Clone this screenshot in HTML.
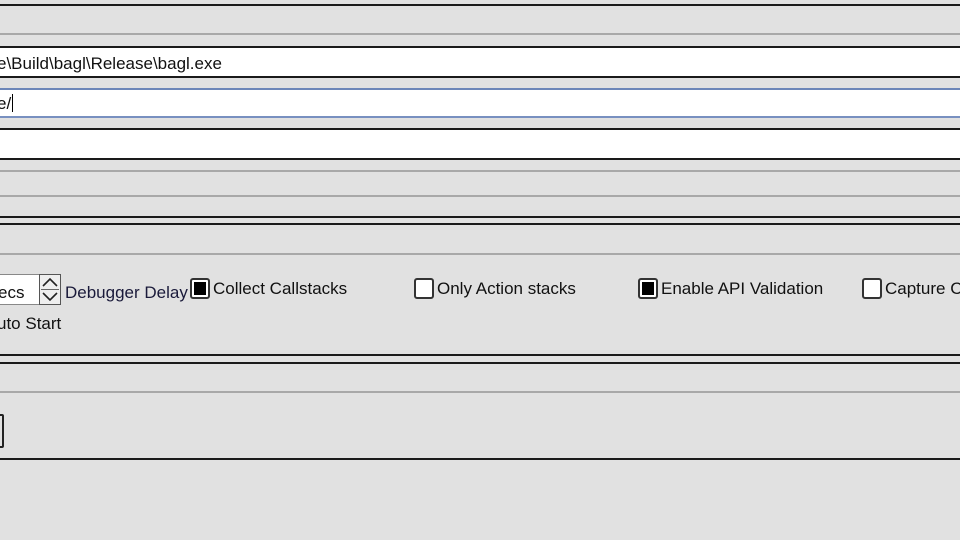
<!DOCTYPE html>
<html><head><style>
body{margin:0;width:960px;height:540px;background:#e1e1e1;position:relative;overflow:hidden;font-family:"Liberation Sans",sans-serif;font-size:17px;color:#111;}
.l{position:absolute;left:0;width:960px;}
.d{height:2px;background:#1a1a1a;}
.g{height:2px;background:#a8a8a8;}
.w{background:#fff;}
.t{position:absolute;white-space:nowrap;}
.cb{position:absolute;width:20px;height:21px;border:2px solid #333;border-radius:3px;background:#fff;box-sizing:border-box;}
.cb.on::after{content:"";position:absolute;left:2px;top:2px;width:12px;height:13px;background:#000;}
</style></head><body>
<div class="l d" style="top:4px"></div>
<div class="l g" style="top:33px"></div>
<div class="l d" style="top:46px"></div>
<div class="l w" style="top:48px;height:29px"></div>
<div class="l d" style="top:76px"></div>
<div class="t" style="left:-3px;top:54px">e\Build\bagl\Release\bagl.exe</div>
<div class="l w" style="top:88px;height:30px;border-top:2px solid #6c86b8;border-bottom:2px solid #7890c0;box-sizing:border-box"></div>
<div class="t" style="left:-3px;top:94px">e/<span style="display:inline-block;width:1px;height:18px;background:#000;vertical-align:-3px;margin-left:1px"></span></div>
<div class="l d" style="top:128px"></div>
<div class="l w" style="top:130px;height:28px"></div>
<div class="l d" style="top:158px"></div>
<div class="l g" style="top:170px"></div>
<div class="l g" style="top:195px"></div>
<div class="l d" style="top:216px"></div>
<div class="l d" style="top:223px"></div>
<div class="l g" style="top:253px"></div>
<div style="position:absolute;left:0;top:274px;width:40px;height:31px;background:#fff;border:1px solid #888;border-left:none;box-sizing:border-box"></div>
<div class="t" style="left:-2px;top:283px">ecs</div>
<div style="position:absolute;left:39px;top:274px;width:22px;height:31px;border:1px solid #555;box-sizing:border-box;background:#eee">
<svg width="20" height="29" style="position:absolute;left:0;top:0"><path d="M3 11 L10 4 L17 11" stroke="#222" stroke-width="1.6" fill="none"/><line x1="1" y1="14.5" x2="19" y2="14.5" stroke="#666"/><path d="M3 18 L10 25 L17 18" stroke="#222" stroke-width="1.6" fill="none"/></svg></div>
<div class="t" style="left:65px;top:283px;color:#1a1a3a">Debugger Delay</div>
<div class="cb on" style="left:190px;top:278px"></div>
<div class="t" style="left:213px;top:279px">Collect Callstacks</div>
<div class="cb" style="left:414px;top:278px"></div>
<div class="t" style="left:437px;top:279px">Only Action stacks</div>
<div class="cb on" style="left:638px;top:278px"></div>
<div class="t" style="left:661px;top:279px">Enable API Validation</div>
<div class="cb" style="left:862px;top:278px"></div>
<div class="t" style="left:885px;top:279px">Capture C</div>
<div class="t" style="left:-3px;top:314px">uto Start</div>
<div class="l d" style="top:354px"></div>
<div class="l d" style="top:362px"></div>
<div class="l g" style="top:391px"></div>
<div style="position:absolute;left:-4px;top:414px;width:4px;height:30px;border:2px solid #222;border-radius:2px"></div>
<div class="l d" style="top:458px"></div>
</body></html>
